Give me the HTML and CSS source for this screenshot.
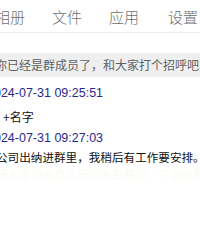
FILE: index.html
```html
<!DOCTYPE html>
<html lang="zh-CN">
<head>
<meta charset="utf-8">
<link rel="stylesheet" href="styles.css">
</head>
<body>
<div class="tabs">
  <span class="tab">相册</span>
  <span class="tab">文件</span>
  <span class="tab">应用</span>
  <span class="tab">设置</span>
</div>
<div class="notice">你已经是群成员了，和大家打个招呼吧</div>
<div class="chat">
  <div class="time t1">2024-07-31 09:25:51</div>
  <div class="msg name">+名字</div>
  <div class="time t2">2024-07-31 09:27:03</div>
  <div class="msg text">公司出纳进群里，我稍后有工作要安排。</div>
  <div class="ghost">请大家把各自负责的账目整理一下发给我</div>
</div>
</body>
</html>
```
FILE: styles.css
```css
html, body {
  margin: 0;
  padding: 0;
  background: #fff;
  overflow: hidden;
}
body {
  width: 200px;
  height: 229px;
  font-family: "Noto Sans CJK SC", "Liberation Sans", sans-serif;
}
.tabs {
  display: flex;
  gap: 27px;
  height: 32px;
  align-items: center;
  margin-left: -5px;
  border-bottom: 1px solid #ededed;
  font-size: 15px;
  font-weight: 300;
  color: #6e6e6e;
  white-space: nowrap;
}
.tab:nth-child(4) { margin-left: 2px; }
.notice {
  margin-top: 20px;
  height: 24px;
  line-height: 24px;
  background: #efefef;
  color: #616161;
  font-size: 12px;
  text-indent: -5px;
  white-space: nowrap;
  overflow: hidden;
}
.chat {
  margin-left: -13px;
  padding-top: 6px;
  white-space: nowrap;
}
.time {
  font-family: "Liberation Sans", sans-serif;
  font-size: 12.5px;
  color: #2a2a8c;
}
.t1 { line-height: 20px; }
.t2 { line-height: 17px; }
.msg {
  font-size: 12px;
  color: #111;
}
.name {
  padding-left: 16px;
  line-height: 27px;
}
.text {
  margin-left: 9px;
  font-size: 11.6px;
  line-height: 20px;
}
.ghost {
  margin-left: 9px;
  font-size: 11.6px;
  line-height: 14px;
  color: #fbfbf4;
}
```
